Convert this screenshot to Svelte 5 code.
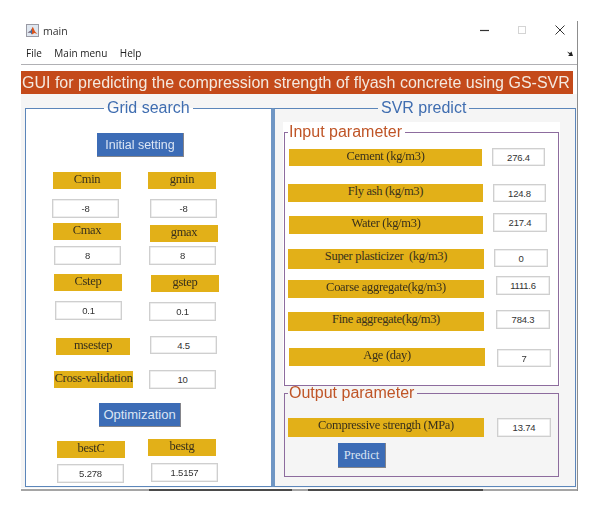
<script>
  // every control as [x, y, w, h] read off the GUIDE figure; flow margins are derived from these
  const L = (text, x, y, w, h = 17) => ({ kind: 'label', text, x, y, w, h });
  const I = (text, x, y, w = 67, h = 19) => ({ kind: 'input', text, x, y, w, h });
  const B = (text, x, y, w, h) => ({ kind: 'button', text, x, y, w, h });

  const gridRows = [
    [B('Initial setting', 97, 133, 87, 24)],
    [L('Cmin', 53, 172, 68), L('gmin', 148, 172, 68)],
    [I('-8', 52, 199), I('-8', 150, 199)],
    [L('Cmax', 53, 223, 68), L('gmax', 150, 225, 68)],
    [I('8', 54, 246), I('8', 149, 246)],
    [L('Cstep', 54, 274, 68), L('gstep', 151, 275, 68)],
    [I('0.1', 55, 301), I('0.1', 149, 302)],
    [L('msestep', 56, 338, 74), I('4.5', 150, 336, 67, 18)],
    [L('Cross-validation', 54, 371, 79), I('10', 149, 370)],
    [B('Optimization', 99, 403, 82, 24)],
    [L('bestC', 57, 441, 68), L('bestg', 148, 439, 68)],
    [I('5.278', 57, 464), I('1.5157', 151, 463)]
  ];

  const inputRows = [
    [L('Cement (kg/m3)', 289, 149, 193), I('276.4', 492, 148, 53, 18)],
    [L('Fly ash (kg/m3)', 288, 184, 195, 18), I('124.8', 493, 184, 53, 18)],
    [L('Water (kg/m3)', 289, 216, 194, 18), I('217.4', 493, 213, 54, 19)],
    [L('Super plasticizer  (kg/m3)', 288, 249, 196, 20), I('0', 494, 249, 54, 18)],
    [L('Coarse aggregate(kg/m3)', 288, 280, 196, 18), I('1111.6', 496, 276, 54, 19)],
    [L('Fine aggregate(kg/m3)', 288, 312, 196, 19), I('784.3', 496, 310, 54, 19)],
    [L('Age (day)', 289, 348, 196, 18), I('7', 497, 349, 54, 18)]
  ];

  const outputRows = [
    [L('Compressive strength (MPa)', 288, 418, 196, 19), I('13.74', 497, 418, 54, 19)],
    [B('Predict', 338, 443, 48, 25)]
  ];

  function place(rows, originX, originY) {
    let bottom = originY;
    return rows.map((cells) => {
      const top = Math.min(...cells.map((c) => c.y));
      const gap = top - bottom;
      bottom = Math.max(...cells.map((c) => c.y + c.h));
      let right = originX;
      const placed = cells.map((c) => {
        const style = `margin:${c.y - top}px 0 0 ${c.x - right}px;width:${c.w}px;height:${c.h}px`;
        right = c.x + c.w;
        return { ...c, style };
      });
      return { gap, cells: placed };
    });
  }

  const grid = place(gridRows, 26, 117);
  const inputs = place(inputRows, 285, 141);
  const outputs = place(outputRows, 285, 400);

  const menus = ['File', 'Main menu', 'Help'];
</script>

{#snippet controls(rows)}
  {#each rows as row}
    <div class="row" style="margin-top:{row.gap}px">
      {#each row.cells as c}
        {#if c.kind === 'label'}
          <div class="label" style={c.style}>{c.text}</div>
        {:else if c.kind === 'input'}
          <div class="edit" style={c.style}>{c.text}</div>
        {:else}
          <button class="push" class:serif={c.text === 'Predict'} class:small={c.text === 'Initial setting'} style={c.style}>{c.text}</button>
        {/if}
      {/each}
    </div>
  {/each}
{/snippet}

<div class="page">
  <div class="window">
    <div class="titlebar">
      <svg class="appicon" width="13" height="13" viewBox="0 0 13 13">
        <rect x="0.5" y="0.5" width="12" height="12" fill="#dfe7f0" stroke="#9a9aa4" />
        <path d="M1.5 8.5 4.5 7 6.8 2.8 9 7.5 11.5 10 8.5 9 6 10.5 4.5 8.5Z" fill="#d9541e" />
        <path d="M1.5 8.5 4.5 7 6 5 6 10.5 4.5 8.5Z" fill="#3c6fa8" />
      </svg>
      <span class="name">main</span>
      <div class="winbtns">
        <svg width="9" height="3" viewBox="0 0 9 3"><path d="M0 1.5H9" stroke="#333" stroke-width="1.2" /></svg>
        <svg width="8" height="8" viewBox="0 0 8 8"><rect x="0.5" y="0.5" width="7" height="7" fill="none" stroke="#d4d4d4" /></svg>
        <svg width="10" height="10" viewBox="0 0 10 10"><path d="M0.5 0.5 9.5 9.5M9.5 0.5 0.5 9.5" stroke="#333" stroke-width="1" /></svg>
      </div>
    </div>
    <div class="menubar">
      {#each menus as m}<span>{m}</span>{/each}
      <svg class="dock" width="6" height="5" viewBox="0 0 6 5"><path d="M0 0.5 3 2 4.5 0.5 6 5H1L2.6 3.4Z" fill="#222" /></svg>
    </div>
    <div class="banner">GUI for predicting the compression strength of flyash concrete using GS-SVR</div>
    <div class="panels">
      <fieldset class="panel left">
        <legend>Grid search</legend>
        {@render controls(grid)}
      </fieldset>
      <fieldset class="panel right">
        <legend>SVR predict</legend>
        <div class="inbox">
          <fieldset class="sub in">
            <legend>Input parameter</legend>
            {@render controls(inputs)}
          </fieldset>
        </div>
        <fieldset class="sub out">
          <legend>Output parameter</legend>
          {@render controls(outputs)}
        </fieldset>
      </fieldset>
    </div>
    <div class="edge">
      <i class="g" style="width:128px"></i><i class="d" style="width:143px"></i><i class="g" style="width:16px"></i><i class="d" style="width:175px"></i><i class="g" style="flex:1"></i>
    </div>
  </div>
</div>

<style>
  :global(body) { margin: 0; background: #fff; }

  .page { height: 512px; padding: 21px 0 0 21px; box-sizing: border-box; filter: blur(0.35px); }
  .window { width: 557px; border-right: 1px solid #8d8d8d; box-sizing: border-box; font-family: "Liberation Sans", Arial, sans-serif; }

  .titlebar { height: 21px; display: flex; align-items: center; padding-left: 5px; }
  .appicon { margin: -3px 4px 0 0; }
  .name { font: 10.5px "Open Sans", "Noto Sans", sans-serif; color: #333; margin-top: -1px; }
  .winbtns { margin-left: auto; display: flex; align-items: center; gap: 29px; margin-right: 12px; margin-top: -3px; }

  .menubar { height: 22px; display: flex; align-items: center; padding-left: 5px; gap: 12.5px; border-bottom: 1px solid #b0b0b4; position: relative; font: 10px "Open Sans", "Noto Sans", sans-serif; color: #222; }
  .dock { position: absolute; right: 4px; top: 9px; }

  .banner { margin: 6px 4px 0 0; height: 23px; background: #c44a1a; color: #f4e9e0; font-size: 16px; line-height: 23px; white-space: nowrap; padding-left: 1px; }

  .panels { display: flex; background: #f5f5f5; padding: 5px 0 0 4px; height: 394px; box-sizing: border-box; }

  fieldset { margin: 0; padding: 0; min-width: 0; box-sizing: border-box; }
  .panel { height: 388px; border: 1px solid #5c86ba; }
  .panel > legend { color: #3f6db0; font-size: 16px; line-height: 18px; padding: 0 3px; }
  .left { width: 248px; background: #fff; border-right-width: 2px; border-right-color: #6f96c4; }
  .left > legend { margin-left: 78px; }
  .right { width: 303px; border-left-width: 2px; border-left-color: #6f96c4; }
  .right > legend { margin-left: 103px; }

  .inbox { margin: 5px 0 0 8px; width: 277px; padding: 1px 0 0 1px; box-sizing: border-box; height: 264px; background: #fff; }
  .sub { width: 275px; border: 1px solid #8d6c9e; }
  .sub > legend { color: #bf5426; padding: 0 3px 0 1px; margin-left: 3px; }
  .in { height: 263px; background: #fff; }
  .in > legend { font-size: 16px; line-height: 18px; background: #fff; }
  .out { height: 91px; margin-left: 9px; }
  .out > legend { font-size: 16px; line-height: 14px; }

  .row { display: flex; align-items: flex-start; }
  .label { box-sizing: border-box; flex: none; background: #e2b018; color: #38301c; font: 12.5px/14px "Liberation Serif", "Times New Roman", serif; letter-spacing: -0.3px; text-align: center; white-space: pre; overflow: hidden; }
  .edit { box-sizing: border-box; flex: none; background: #fff; border: 1px solid #cfcfcf; box-shadow: inset 0 0 0 0.5px #dedede; color: #333; font-size: 9.5px; letter-spacing: -0.2px; display: flex; align-items: center; justify-content: center; }
  .push { box-sizing: border-box; flex: none; padding: 0; background: #3c6cb6; border: 0; border-right: 1px solid #85858a; border-bottom: 1px solid #85858a; color: #dbe5f4; font: 13px "Liberation Sans", Arial, sans-serif; }
  .push.small { font-size: 12.5px; }
  .push.serif { font: 12.5px "Liberation Serif", "Times New Roman", serif; }

  .edge { height: 2px; display: flex; margin-top: 1px; }
  .edge .g { background: #a5a5a5; display: block; }
  .edge .d { background: #4a4a4a; display: block; }
</style>
